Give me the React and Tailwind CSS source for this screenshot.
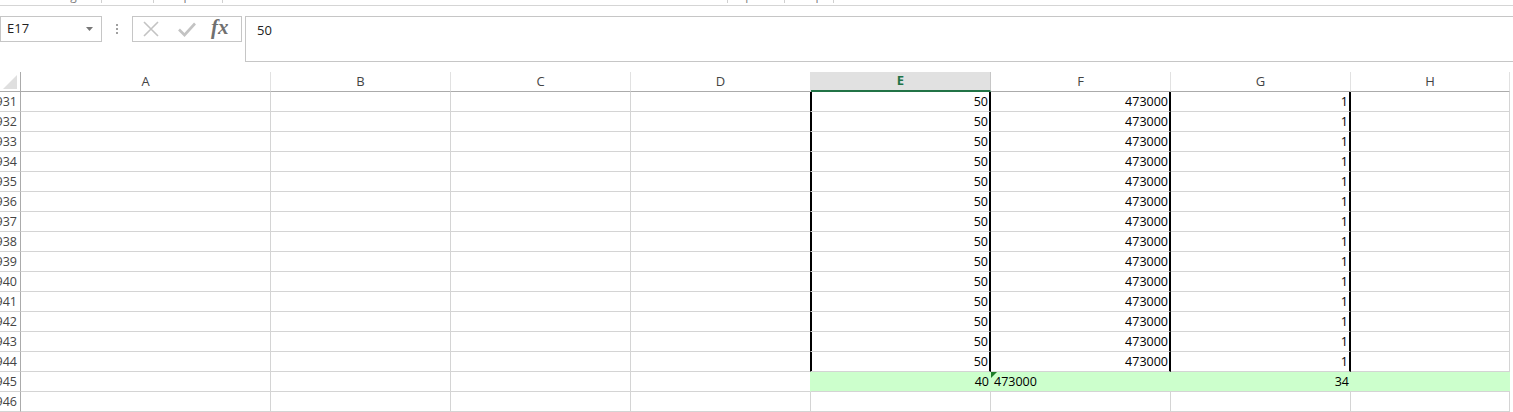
import React from 'react';

const rows = [];
for (let n = 1931; n <= 1946; n++) rows.push(n);

const cols = [
  { key: 'A', w: 'w-[250px]' },
  { key: 'B', w: 'w-[180px]' },
  { key: 'C', w: 'w-[180px]' },
  { key: 'D', w: 'w-[180px]' },
  { key: 'E', w: 'w-[180px]' },
  { key: 'F', w: 'w-[180px]' },
  { key: 'G', w: 'w-[180px]' },
  { key: 'H', w: 'w-[159px]' },
];

function Ribbon() {
  // only the bottom edge of the ribbon tab labels is visible
  return (
    <div className="flex h-[6px] overflow-hidden border-b border-[#d5d5d5] text-[12px] leading-[14px] text-[#808080] font-['Open_Sans']">
      <div className="w-[25px]" />
      <div className="w-[76px] -mt-[11px]">Licensing</div>
      <div className="w-px h-[3px] bg-[#d0d0d0]" />
      <div className="w-[15px]" />
      <div className="w-[36px] -mt-[11px]">GAF</div>
      <div className="w-px h-[3px] bg-[#d0d0d0]" />
      <div className="w-[5px]" />
      <div className="w-[52px] -mt-[11px]">Template</div>
      <div className="w-[11px] -mt-[11px] text-[9px]">▾</div>
      <div className="w-px h-[3px] bg-[#d0d0d0]" />
      <div className="w-[232px]" />
      <div className="w-[272px] -mt-[11px]">Actions</div>
      <div className="w-px h-[3px] bg-[#d0d0d0]" />
      <div className="w-[8px]" />
      <div className="w-[48px] -mt-[11px]">Options</div>
      <div className="w-px h-[3px] bg-[#d0d0d0]" />
      <div className="w-[12px]" />
      <div className="w-[36px] -mt-[11px]">Help</div>
      <div className="w-px h-[3px] bg-[#d0d0d0]" />
    </div>
  );
}

function FormulaBar() {
  return (
    <div className="flex items-start h-[66px] pt-[10px] font-['Open_Sans']">
      <div className="flex items-center justify-between w-[102px] h-[26px] border border-[#c6c6c6] pl-[6px] pr-[8px] text-[13px] text-[#222]">
        <span>E17</span>
        <svg width="7" height="4" viewBox="0 0 7 4">
          <path d="M0 0h7L3.5 4z" fill="#777" />
        </svg>
      </div>
      <div className="flex flex-col justify-center gap-[2px] w-[30px] h-[26px] items-center">
        <span className="w-[2px] h-[2px] bg-[#a0a0a0]" />
        <span className="w-[2px] h-[2px] bg-[#a0a0a0]" />
        <span className="w-[2px] h-[2px] bg-[#a0a0a0]" />
      </div>
      <div className="flex items-center w-[110px] h-[26px] border border-[#c6c6c6] pl-[9px]">
        <svg width="18" height="18" viewBox="0 0 18 18">
          <path d="M2 2L16 16M16 2L2 16" stroke="#c3c3c3" strokeWidth="1.6" fill="none" />
        </svg>
        <svg width="20" height="18" viewBox="0 0 20 18" className="ml-[17px]">
          <path d="M2 9.5L7.5 15L18 3.5" stroke="#c3c3c3" strokeWidth="2.6" fill="none" />
        </svg>
        <span className="ml-[14px] -mt-[3px] font-['Liberation_Serif'] italic font-bold text-[21px] leading-none text-[#707070]">
          fx
        </span>
      </div>
      <div className="ml-[3px] flex-1 h-[46px] border border-r-0 border-[#c6c6c6] pl-[11px] pt-[4px] text-[13px] text-[#222]">
        50
      </div>
    </div>
  );
}

function HeaderRow() {
  return (
    <div className="flex h-[20px] font-['Open_Sans'] text-[13px] text-[#444]">
      <div className="w-[21px] h-[20px] border-r border-b border-[#ababab] flex items-end justify-end pr-[3px] pb-[2px]">
        <svg width="14" height="14" viewBox="0 0 14 14">
          <path d="M14 0V14H0z" fill="#dfdfdf" />
        </svg>
      </div>
      {cols.map((c) =>
        c.key === 'E' ? (
          <div
            key={c.key}
            className={`${c.w} h-[20px] bg-[#e1e1e1] border-r border-r-[#c6c6c6] border-b-2 border-b-[#217346] flex items-center justify-center font-bold text-[#217346]`}
          >
            {c.key}
          </div>
        ) : (
          <div
            key={c.key}
            className={`${c.w} h-[20px] border-r border-r-[#e1e1e1] border-b border-b-[#ababab] flex items-center justify-center`}
          >
            {c.key}
          </div>
        )
      )}
    </div>
  );
}

function DataRow({ n }) {
  const boxed = n <= 1944;
  const total = n === 1945;
  const base = 'h-[20px] border-b border-[#d4d4d4] flex items-center pt-[2px]';
  return (
    <div className="flex">
      <div className="w-[21px] h-[20px] border-r border-r-[#ababab] border-b border-b-[#d4d4d4] flex items-center justify-end pr-[3px] pt-[2px] overflow-hidden whitespace-nowrap font-['Open_Sans'] text-[12.5px] text-[#444]">
        {n}
      </div>
      <div className={`w-[250px] ${base} border-r`} />
      <div className={`w-[180px] ${base} border-r`} />
      <div className={`w-[180px] ${base} border-r`} />
      <div
        className={`w-[180px] ${base} border-r ${
          boxed ? 'border-r-black' : total ? 'border-r-[#ccffcc]' : ''
        }`}
      />
      {boxed ? (
        <>
          <div className={`w-[180px] ${base} border-r-2 border-r-black shadow-[inset_1px_0_0_#000] justify-end pr-[1px]`}>50</div>
          <div className={`w-[180px] ${base} border-r-2 border-r-black justify-end pr-[1px]`}>473000</div>
          <div className={`w-[180px] ${base} border-r-2 border-r-black justify-end pr-[1px]`}>1</div>
          <div className={`w-[159px] ${base} border-r`} />
        </>
      ) : total ? (
        <>
          <div className={`w-[180px] ${base} bg-[#ccffcc] justify-end pr-[2px]`}>40</div>
          <div className={`relative w-[180px] ${base} bg-[#ccffcc] pl-[3px]`}>
            <svg width="6" height="6" viewBox="0 0 6 6" className="absolute left-0 top-0">
              <path d="M0 0H6L0 6z" fill="#1d7d28" />
            </svg>
            473000
          </div>
          <div className={`w-[180px] ${base} bg-[#ccffcc] justify-end pr-[2px]`}>34</div>
          <div className={`w-[159px] ${base} bg-[#ccffcc]`} />
        </>
      ) : (
        <>
          <div className={`w-[180px] ${base} border-r`} />
          <div className={`w-[180px] ${base} border-r`} />
          <div className={`w-[180px] ${base} border-r`} />
          <div className={`w-[159px] ${base} border-r`} />
        </>
      )}
    </div>
  );
}

export default function App() {
  return (
    <div className="w-[1513px] h-[412px] overflow-hidden bg-white">
      <Ribbon />
      <FormulaBar />
      <HeaderRow />
      <div className="font-['Open_Sans'] text-[12.5px] text-black">
        {rows.map((n) => (
          <DataRow key={n} n={n} />
        ))}
      </div>
    </div>
  );
}
